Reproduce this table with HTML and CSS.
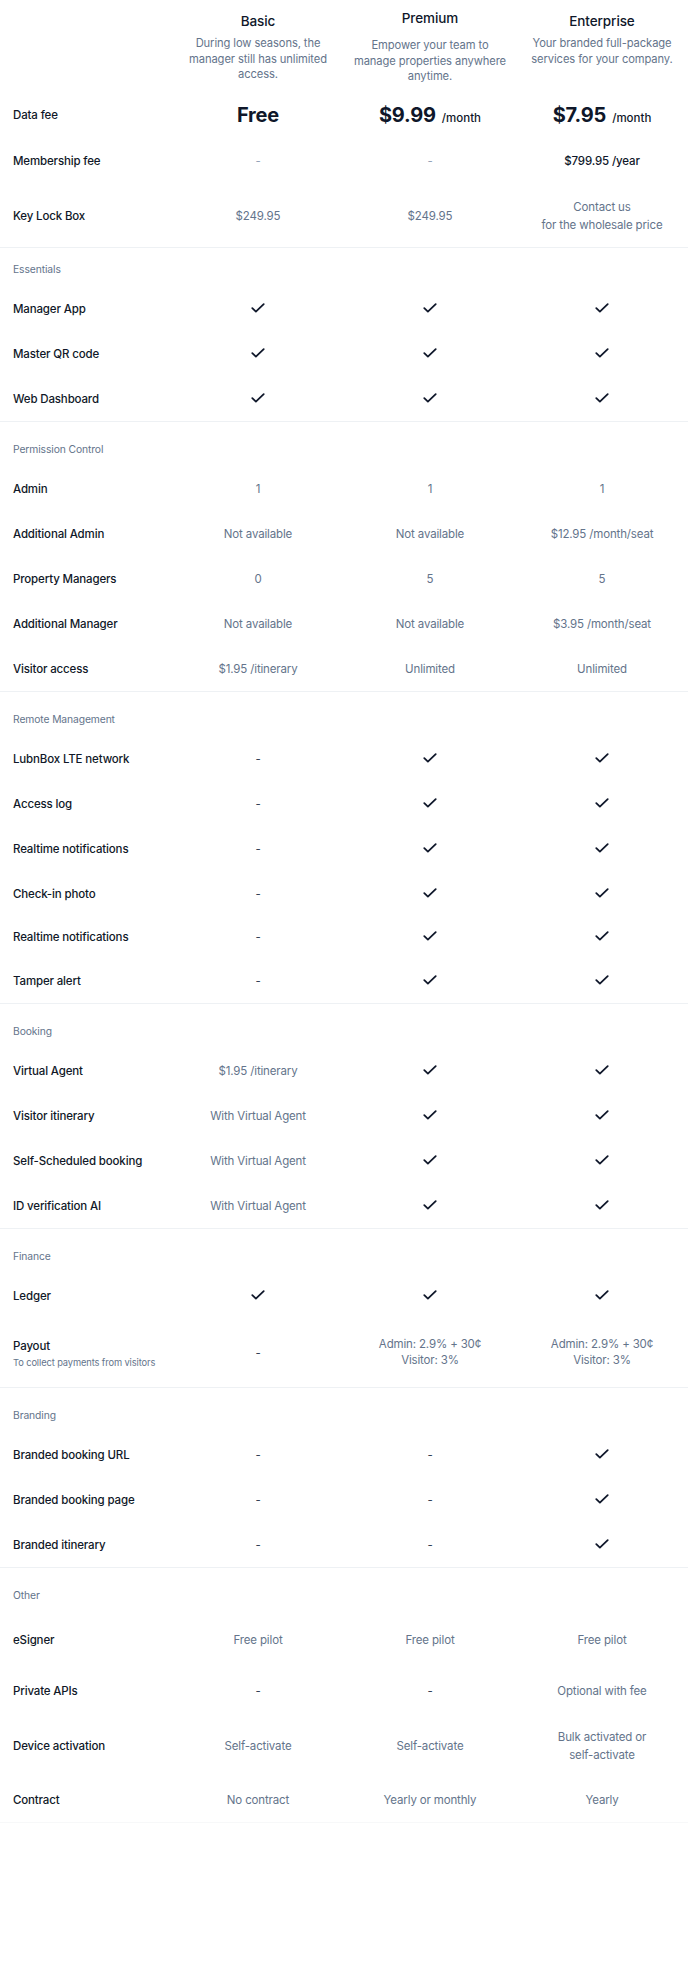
FILE: index.html
```html
<!DOCTYPE html>
<html lang="en">
<head>
<meta charset="utf-8">
<title>Pricing comparison</title>
<link rel="stylesheet" href="styles.css">
</head>
<body>
<svg class="sprite" width="0" height="0" aria-hidden="true">
  <symbol id="check" viewBox="0 0 14 10">
    <path d="M1.3 5.2 L4.9 8.6 L12.7 1.2" fill="none" stroke="currentColor" stroke-width="1.8" stroke-linecap="round" stroke-linejoin="round"/>
  </symbol>
</svg>
<main class="pricing">
  <header class="plans">
    <div class="plan plan--empty"></div>
    <div class="plan">
      <h2 class="plan__name">Basic</h2>
      <p class="plan__desc">During low seasons, the manager still has unlimited access.</p>
    </div>
    <div class="plan plan--featured">
      <h2 class="plan__name">Premium</h2>
      <p class="plan__desc">Empower your team to manage properties anywhere anytime.</p>
    </div>
    <div class="plan">
      <h2 class="plan__name">Enterprise</h2>
      <p class="plan__desc">Your branded full-package services for your company.</p>
    </div>
  </header>

  <section class="group group--top">
    <div class="row row--price">
      <div class="label">Data fee</div>
      <div class="cell"><span class="price">Free</span></div>
      <div class="cell"><span class="price">$9.99</span><span class="per">/month</span></div>
      <div class="cell"><span class="price">$7.95</span><span class="per">/month</span></div>
    </div>
    <div class="row row--price">
      <div class="label">Membership fee</div>
      <div class="cell muted">-</div>
      <div class="cell muted">-</div>
      <div class="cell strong">$799.95 /year</div>
    </div>
    <div class="row row--h63">
      <div class="label">Key Lock Box</div>
      <div class="cell">$249.95</div>
      <div class="cell">$249.95</div>
      <div class="cell cell--lines">Contact us<br>for the wholesale price</div>
    </div>
  </section>

  <section class="group">
    <h3 class="group__title group__title--first">Essentials</h3>
    <div class="row">
      <div class="label">Manager App</div>
      <div class="cell"><svg class="check"><use href="#check"/></svg></div>
      <div class="cell"><svg class="check"><use href="#check"/></svg></div>
      <div class="cell"><svg class="check"><use href="#check"/></svg></div>
    </div>
    <div class="row">
      <div class="label">Master QR code</div>
      <div class="cell"><svg class="check"><use href="#check"/></svg></div>
      <div class="cell"><svg class="check"><use href="#check"/></svg></div>
      <div class="cell"><svg class="check"><use href="#check"/></svg></div>
    </div>
    <div class="row">
      <div class="label">Web Dashboard</div>
      <div class="cell"><svg class="check"><use href="#check"/></svg></div>
      <div class="cell"><svg class="check"><use href="#check"/></svg></div>
      <div class="cell"><svg class="check"><use href="#check"/></svg></div>
    </div>
  </section>

  <section class="group">
    <h3 class="group__title">Permission Control</h3>
    <div class="row">
      <div class="label">Admin</div>
      <div class="cell">1</div>
      <div class="cell">1</div>
      <div class="cell">1</div>
    </div>
    <div class="row">
      <div class="label">Additional Admin</div>
      <div class="cell">Not available</div>
      <div class="cell">Not available</div>
      <div class="cell">$12.95 /month/seat</div>
    </div>
    <div class="row">
      <div class="label">Property Managers</div>
      <div class="cell">0</div>
      <div class="cell">5</div>
      <div class="cell">5</div>
    </div>
    <div class="row">
      <div class="label">Additional Manager</div>
      <div class="cell">Not available</div>
      <div class="cell">Not available</div>
      <div class="cell">$3.95 /month/seat</div>
    </div>
    <div class="row">
      <div class="label">Visitor access</div>
      <div class="cell">$1.95 /itinerary</div>
      <div class="cell">Unlimited</div>
      <div class="cell">Unlimited</div>
    </div>
  </section>

  <section class="group">
    <h3 class="group__title">Remote Management</h3>
    <div class="row">
      <div class="label">LubnBox LTE network</div>
      <div class="cell dash">-</div>
      <div class="cell"><svg class="check"><use href="#check"/></svg></div>
      <div class="cell"><svg class="check"><use href="#check"/></svg></div>
    </div>
    <div class="row">
      <div class="label">Access log</div>
      <div class="cell dash">-</div>
      <div class="cell"><svg class="check"><use href="#check"/></svg></div>
      <div class="cell"><svg class="check"><use href="#check"/></svg></div>
    </div>
    <div class="row">
      <div class="label">Realtime notifications</div>
      <div class="cell dash">-</div>
      <div class="cell"><svg class="check"><use href="#check"/></svg></div>
      <div class="cell"><svg class="check"><use href="#check"/></svg></div>
    </div>
    <div class="row">
      <div class="label">Check-in photo</div>
      <div class="cell dash">-</div>
      <div class="cell"><svg class="check"><use href="#check"/></svg></div>
      <div class="cell"><svg class="check"><use href="#check"/></svg></div>
    </div>
    <div class="row row--h42">
      <div class="label">Realtime notifications</div>
      <div class="cell dash">-</div>
      <div class="cell"><svg class="check"><use href="#check"/></svg></div>
      <div class="cell"><svg class="check"><use href="#check"/></svg></div>
    </div>
    <div class="row">
      <div class="label">Tamper alert</div>
      <div class="cell dash">-</div>
      <div class="cell"><svg class="check"><use href="#check"/></svg></div>
      <div class="cell"><svg class="check"><use href="#check"/></svg></div>
    </div>
  </section>

  <section class="group">
    <h3 class="group__title">Booking</h3>
    <div class="row">
      <div class="label">Virtual Agent</div>
      <div class="cell">$1.95 /itinerary</div>
      <div class="cell"><svg class="check"><use href="#check"/></svg></div>
      <div class="cell"><svg class="check"><use href="#check"/></svg></div>
    </div>
    <div class="row">
      <div class="label">Visitor itinerary</div>
      <div class="cell">With Virtual Agent</div>
      <div class="cell"><svg class="check"><use href="#check"/></svg></div>
      <div class="cell"><svg class="check"><use href="#check"/></svg></div>
    </div>
    <div class="row">
      <div class="label">Self-Scheduled booking</div>
      <div class="cell">With Virtual Agent</div>
      <div class="cell"><svg class="check"><use href="#check"/></svg></div>
      <div class="cell"><svg class="check"><use href="#check"/></svg></div>
    </div>
    <div class="row">
      <div class="label">ID verification AI</div>
      <div class="cell">With Virtual Agent</div>
      <div class="cell"><svg class="check"><use href="#check"/></svg></div>
      <div class="cell"><svg class="check"><use href="#check"/></svg></div>
    </div>
  </section>

  <section class="group">
    <h3 class="group__title">Finance</h3>
    <div class="row">
      <div class="label">Ledger</div>
      <div class="cell"><svg class="check"><use href="#check"/></svg></div>
      <div class="cell"><svg class="check"><use href="#check"/></svg></div>
      <div class="cell"><svg class="check"><use href="#check"/></svg></div>
    </div>
    <div class="row row--h69">
      <div class="label label--stack">
        <span>Payout</span>
        <span class="label__sub">To collect payments from visitors</span>
      </div>
      <div class="cell dash">-</div>
      <div class="cell cell--fee">Admin: 2.9% + 30¢<br>Visitor: 3%</div>
      <div class="cell cell--fee">Admin: 2.9% + 30¢<br>Visitor: 3%</div>
    </div>
  </section>

  <section class="group">
    <h3 class="group__title">Branding</h3>
    <div class="row">
      <div class="label">Branded booking URL</div>
      <div class="cell dash">-</div>
      <div class="cell dash">-</div>
      <div class="cell"><svg class="check"><use href="#check"/></svg></div>
    </div>
    <div class="row">
      <div class="label">Branded booking page</div>
      <div class="cell dash">-</div>
      <div class="cell dash">-</div>
      <div class="cell"><svg class="check"><use href="#check"/></svg></div>
    </div>
    <div class="row">
      <div class="label">Branded itinerary</div>
      <div class="cell dash">-</div>
      <div class="cell dash">-</div>
      <div class="cell"><svg class="check"><use href="#check"/></svg></div>
    </div>
  </section>

  <section class="group group--last">
    <h3 class="group__title">Other</h3>
    <div class="row row--h56">
      <div class="label">eSigner</div>
      <div class="cell">Free pilot</div>
      <div class="cell">Free pilot</div>
      <div class="cell">Free pilot</div>
    </div>
    <div class="row row--h46">
      <div class="label">Private APIs</div>
      <div class="cell dash">-</div>
      <div class="cell dash">-</div>
      <div class="cell">Optional with fee</div>
    </div>
    <div class="row row--h63">
      <div class="label">Device activation</div>
      <div class="cell">Self-activate</div>
      <div class="cell">Self-activate</div>
      <div class="cell cell--lines">Bulk activated or<br>self-activate</div>
    </div>
    <div class="row">
      <div class="label">Contract</div>
      <div class="cell">No contract</div>
      <div class="cell">Yearly or monthly</div>
      <div class="cell">Yearly</div>
    </div>
  </section>
</main>
</body>
</html>
```

FILE: styles.css
```css
* {
  box-sizing: border-box;
}

html,
body {
  margin: 0;
  padding: 0;
  background: #ffffff;
}

body {
  font-family: "Inter", "Noto Sans", sans-serif;
  color: #0f172a;
  -webkit-font-smoothing: antialiased;
}

.sprite {
  position: absolute;
  width: 0;
  height: 0;
  overflow: hidden;
}

.pricing {
  width: 688px;
}

/* ---------- plan header ---------- */
.plans {
  display: grid;
  grid-template-columns: repeat(4, 1fr);
  height: 92px;
}

.plan {
  padding: 12px 8px 0;
  text-align: center;
}

.plan__name {
  margin: 0;
  font-size: 13.5px;
  line-height: 18px;
  font-weight: 500;
  letter-spacing: -0.1px;
  color: #0f172a;
}

.plan__desc {
  margin: 6px 0 0;
  font-size: 11.2px;
  line-height: 15.5px;
  font-weight: 400;
  letter-spacing: -0.1px;
  color: #64748b;
}

.plan--featured {
  padding-top: 9px;
}

.plan--featured .plan__desc {
  margin-top: 11px;
}

/* ---------- groups ---------- */
.group {
  border-top: 1px solid #eef1f4;
}

.group--top {
  border-top: 0;
}

.group--last {
  border-bottom: 1px solid #f7f8f9;
}

.group__title {
  margin: 0;
  padding: 20px 0 10px 13px;
  font-size: 10.3px;
  line-height: 14px;
  font-weight: 400;
  letter-spacing: -0.1px;
  color: #64748b;
}

.group__title--first {
  padding-top: 14px;
}

/* ---------- rows ---------- */
.row {
  display: grid;
  grid-template-columns: repeat(4, 1fr);
  align-items: center;
  height: 45px;
}

.row--price,
.row--h46 {
  height: 46px;
}

.row--h42 {
  height: 42px;
}

.row--h56 {
  height: 56px;
}

.row--h63 {
  height: 63px;
}

.row--h69 {
  height: 69px;
}

.label {
  padding-left: 13px;
  font-size: 11.5px;
  line-height: 18px;
  font-weight: 500;
  letter-spacing: -0.15px;
  color: #101828;
}

.label--stack {
  display: flex;
  flex-direction: column;
  gap: 1px;
  padding-top: 2px;
}

.label__sub {
  font-size: 9.3px;
  line-height: 14px;
  font-weight: 400;
  letter-spacing: -0.1px;
  color: #64748b;
}

.cell {
  display: flex;
  justify-content: center;
  align-items: baseline;
  text-align: center;
  font-size: 11.5px;
  line-height: 18px;
  font-weight: 400;
  letter-spacing: -0.15px;
  color: #64748b;
}

.cell--lines {
  display: block;
  line-height: 18px;
}

.cell--fee {
  display: block;
  line-height: 15.5px;
}

.muted {
  color: #94a3b8;
}

.dash {
  color: #334155;
}

.strong {
  color: #0f172a;
  font-weight: 500;
}

.price {
  font-size: 20px;
  line-height: 26px;
  font-weight: 700;
  color: #0f172a;
  letter-spacing: -0.2px;
}

.per {
  margin-left: 6px;
  font-size: 11.5px;
  font-weight: 500;
  letter-spacing: 0;
  color: #0f172a;
}

.check {
  display: block;
  width: 14px;
  height: 10px;
  color: #0f172a;
  margin-top: -2px;
}
```
